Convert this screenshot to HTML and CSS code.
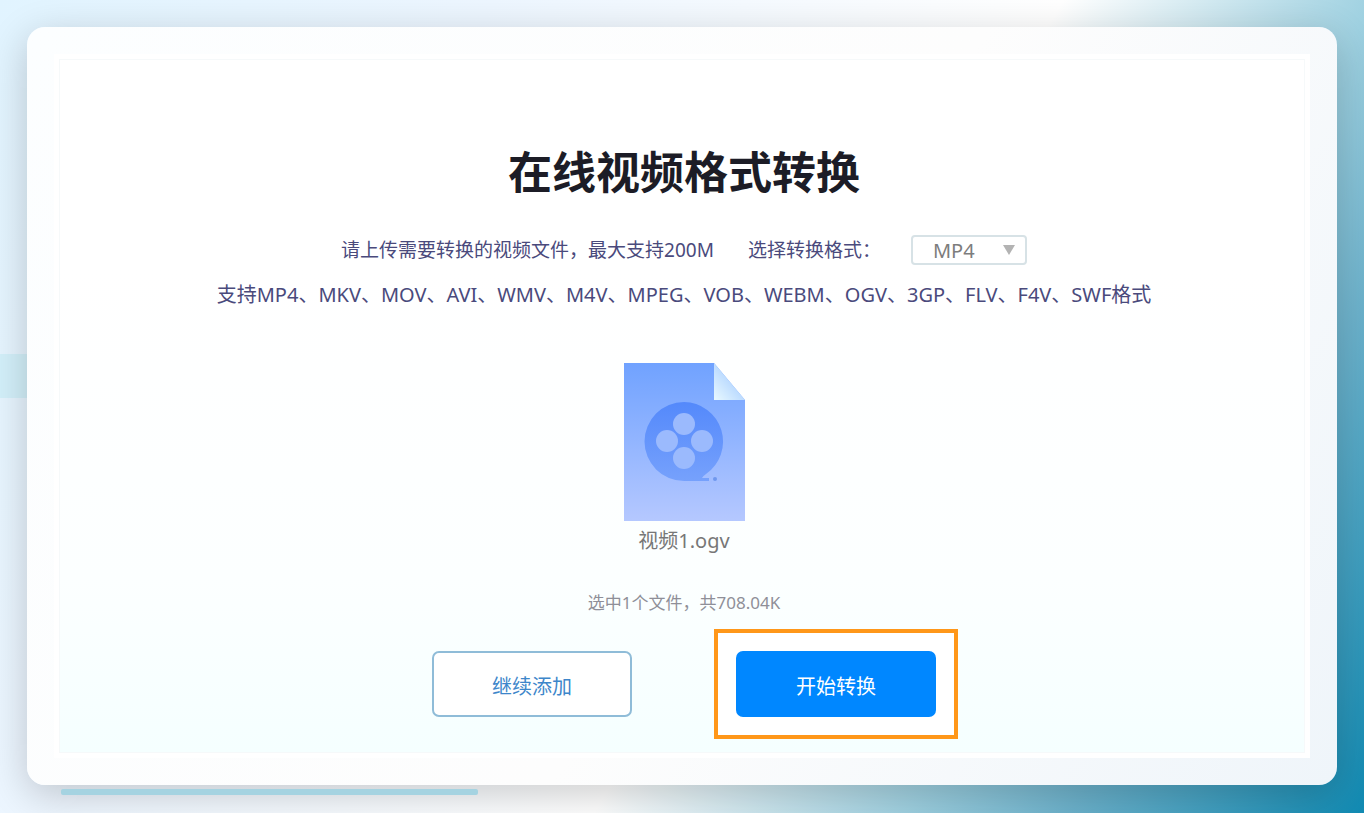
FILE: index.html
```html
<!DOCTYPE html>
<html lang="zh-CN">
  <head>
    <meta charset="utf-8">
    <meta name="viewport" content="width=device-width, initial-scale=1">
    <title>在线视频格式转换</title>
    <link rel="stylesheet" href="styles.css">
  </head>
  <body>
    <div class="side-bar"></div>
    <div class="card">
      <div class="frame">
        <main class="panel">
          <h1>在线视频格式转换</h1>

          <div class="format-row">
            <span>请上传需要转换的视频文件，最大支持200M</span>
            <label for="format">选择转换格式：</label>
            <div class="select-box">
              <select id="format">
                <option>MP4</option>
                <option>MKV</option>
                <option>MOV</option>
                <option>AVI</option>
              </select>
              <svg class="arrow" viewBox="0 0 12 10" aria-hidden="true"><path d="M0 0h12L6 10z" /></svg>
            </div>
          </div>
          <p class="formats">支持MP4、MKV、MOV、AVI、WMV、M4V、MPEG、VOB、WEBM、OGV、3GP、FLV、F4V、SWF格式</p>

          <svg class="file-icon" viewBox="0 0 121 158" aria-hidden="true">
            <defs>
              <linearGradient id="paper" x1="0" y1="0" x2="0" y2="1">
                <stop offset="0" stop-color="#70a2ff" />
                <stop offset="1" stop-color="#b5c8ff" />
              </linearGradient>
              <linearGradient id="fold" x1="1" y1="0" x2="0" y2="1">
                <stop offset="0.4" stop-color="#b4d6ff" />
                <stop offset="1" stop-color="#e9f9ff" />
              </linearGradient>
              <linearGradient id="reel" x1="0" y1="0" x2="0" y2="1">
                <stop offset="0" stop-color="#5489fb" />
                <stop offset="1" stop-color="#76a1fc" />
              </linearGradient>
            </defs>
            <path d="M0 0h90l31 37v121H0z" fill="url(#paper)" />
            <path d="M90 0l31 37H90z" fill="url(#fold)" />
            <path d="M60 39a39.500 39.500 0 0 1 22 72q-3 2-4 4h7v3H60a39.500 39.500 0 0 1 0-79z" fill="url(#reel)" />
            <g fill="#9bbafd">
              <circle cx="60" cy="61" r="11" />
              <circle cx="43" cy="78" r="11" />
              <circle cx="78" cy="78" r="11" />
              <circle cx="60" cy="95" r="11" />
            </g>
            <circle cx="91" cy="116" r="2" fill="#6f98ee" />
          </svg>
          <p class="file-name">视频1.ogv</p>
          <p class="summary">选中1个文件，共708.04K</p>

          <div class="buttons">
            <button class="btn add" type="button">继续添加</button>
            <div class="highlight">
              <button class="btn start" type="button">开始转换</button>
            </div>
          </div>
        </main>
      </div>
    </div>
    <div class="bottom-bar"></div>
  </body>
</html>
```
FILE: styles.css
```css
* {
  box-sizing: border-box;
}
body {
  position: relative;
  margin: 0;
  padding: 27px;
  min-height: 100vh;
  font-family: "Noto Sans", "Noto Sans CJK SC", sans-serif;
  font-size: 20px;
  line-height: 28px;
  color: #4a4a7c;
  background: linear-gradient(120deg, #e1f4ff 0%, #edf6ff 27%, #fff 58%, #9fd1e1 75%, #6cb2cc 84%, #118ab2 100%);
}
h1, p {
  margin: 0;
}
.card {
  position: relative;
  padding: 27px;
  border-radius: 18px;
  background: linear-gradient(120deg, #fcfeff 0%, #fdfdfd 55%, #eff5fa 100%);
  box-shadow: 0 10px 40px rgba(0, 0, 0, 0.2);
}
.frame {
  padding: 5px;
  background: #fff;
}
.panel {
  display: flex;
  flex-direction: column;
  align-items: center;
  padding: 80px 20px 13px 24px;
  border: 1px solid #f6f9fa;
  background: linear-gradient(#fff 30%, #fcffff 75%, #f5ffff);
}
h1 {
  font-size: 44px;
  line-height: 64px;
  font-weight: 700;
  color: #1c1c26;
}
.format-row {
  display: flex;
  align-items: center;
  margin-top: 31px;
  font-size: 19px;
}
.format-row label {
  margin-left: 34px;
}
.select-box {
  position: relative;
  margin-left: 30px;
}
.select-box select {
  display: block;
  width: 116px;
  height: 30px;
  padding: 0 20px;
  font: inherit;
  font-size: 20px;
  color: #7d7d7d;
  border: 2px solid #d7e2e6;
  border-radius: 4px;
  background: #fff;
  appearance: none;
}
.arrow {
  position: absolute;
  right: 12px;
  top: 10px;
  width: 12px;
  height: 10px;
  fill: #b3b3b3;
  pointer-events: none;
}
.formats {
  margin-top: 16px;
}
.file-icon {
  display: block;
  width: 121px;
  height: 158px;
  margin-top: 54px;
}
.file-name {
  margin-top: 6px;
  color: #777;
}
.summary {
  margin-top: 34px;
  font-size: 17px;
  color: #8f8f98;
}
.buttons {
  display: flex;
  align-items: center;
  margin-top: 12px;
  padding-left: 22px;
  gap: 82px;
}
.btn {
  width: 200px;
  height: 66px;
  padding: 6px 0 0;
  font: inherit;
  border-radius: 7px;
  cursor: pointer;
}
.add {
  color: #3d86ca;
  border: 2px solid #8fbcd8;
  background: #fff;
}
.start {
  display: block;
  color: #fff;
  border: none;
  background: #0087ff;
}
.highlight {
  padding: 18px;
  border: 4px solid #ff9719;
  background: #fff;
}
/* decorations around the card */
.side-bar {
  position: absolute;
  left: 0;
  top: 354px;
  width: 60px;
  height: 44px;
  background: #d3f0fa;
}
.bottom-bar {
  position: absolute;
  left: 61px;
  bottom: 18px;
  width: calc(33% - 33px);
  height: 6px;
  border-radius: 2px;
  background: #a5d3e1;
}
```
